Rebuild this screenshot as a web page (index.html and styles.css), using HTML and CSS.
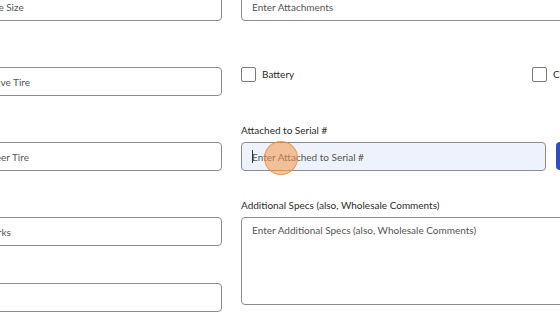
FILE: index.html
```html
<!DOCTYPE html>
<html lang="en">
<head>
    <meta charset="UTF-8">
    <meta name="viewport" content="width=device-width, initial-scale=1.0">
    <title>Equipment Details</title>
    <link rel="stylesheet" href="styles.css">
</head>
<body>
    <div class="form">
        <div class="col col-left">
            <div class="field">
                <label>Tire Size</label>
                <input type="text" placeholder="Enter Tire Size">
            </div>
            <div class="field">
                <label>Drive Tire</label>
                <input type="text" placeholder="Enter Drive Tire">
            </div>
            <div class="field">
                <label>Steer Tire</label>
                <input type="text" placeholder="Enter Steer Tire">
            </div>
            <div class="field">
                <label>Forks</label>
                <input type="text" placeholder="Enter Forks">
            </div>
            <div class="field field-tight">
                <input type="text">
            </div>
        </div>
        <div class="col col-right">
            <div class="field">
                <label>Attachments</label>
                <input type="text" placeholder="Enter Attachments">
            </div>
            <div class="checks">
                <label class="check check-wide"><span class="box"></span>Battery</label>
                <label class="check"><span class="box"></span>Charger</label>
            </div>
            <div class="field">
                <label>Attached to Serial #</label>
                <div class="serial-row">
                    <div class="focus-wrap">
                        <input type="text" class="focused" placeholder="Enter Attached to Serial #">
                        <span class="caret"></span>
                        <span class="click-dot"></span>
                    </div>
                    <button class="btn-primary"></button>
                </div>
            </div>
            <div class="field">
                <label>Additional Specs (also, Wholesale Comments)</label>
                <textarea placeholder="Enter Additional Specs (also, Wholesale Comments)"></textarea>
            </div>
        </div>
    </div>
</body>
</html>
```

FILE: styles.css
```css
body {
    margin: 0;
    overflow: hidden;
    background-color: #fff;
    font-family: Lato, "Noto Sans", sans-serif;
    font-size: 10px;
    color: #2b2b2b;
}
.form {
    display: grid;
    grid-template-columns: 272px 380px;
    column-gap: 19px;
    margin-left: -50px;
    margin-top: -30px;
}
.col {
    display: flex;
    flex-direction: column;
    gap: 24px;
}
.field {
    display: flex;
    flex-direction: column;
}
.field label {
    line-height: 16px;
    padding-top: 2px;
    margin-bottom: 4px;
}
.field-tight {
    margin-top: 13px;
}
input, textarea {
    box-sizing: border-box;
    width: 100%;
    height: 29px;
    padding: 0 10px;
    border: 1px solid #8c8c8c;
    border-radius: 4px;
    font-family: inherit;
    font-size: 10px;
    color: #333;
    background-color: #fff;
    outline: none;
}
input::placeholder, textarea::placeholder {
    color: #555;
}
textarea {
    height: 88px;
    padding: 6px 10px;
    resize: none;
}
.checks {
    display: flex;
    margin: 22px 0 15px;
}
.check {
    display: flex;
    align-items: center;
    height: 14px;
    gap: 6px;
}
.check-wide {
    width: 291px;
}
.box {
    box-sizing: border-box;
    width: 15px;
    height: 15px;
    border: 1px solid #7a7a7a;
    border-radius: 2px;
}
.serial-row {
    display: flex;
    gap: 10px;
}
.focus-wrap {
    position: relative;
    width: 305px;
}
input.focused {
    background-color: #eef2fd;
}
.caret {
    position: absolute;
    left: 11px;
    top: 8px;
    width: 1px;
    height: 13px;
    background-color: #333;
}
.click-dot {
    position: absolute;
    left: 23px;
    top: -1px;
    width: 32px;
    height: 32px;
    border-radius: 50%;
    background-color: rgba(244, 150, 70, 0.55);
    border: 1px solid rgba(232, 135, 60, 0.7);
}
.btn-primary {
    width: 60px;
    height: 28px;
    border: none;
    border-radius: 4px;
    background-color: #2e4fc2;
}
```
